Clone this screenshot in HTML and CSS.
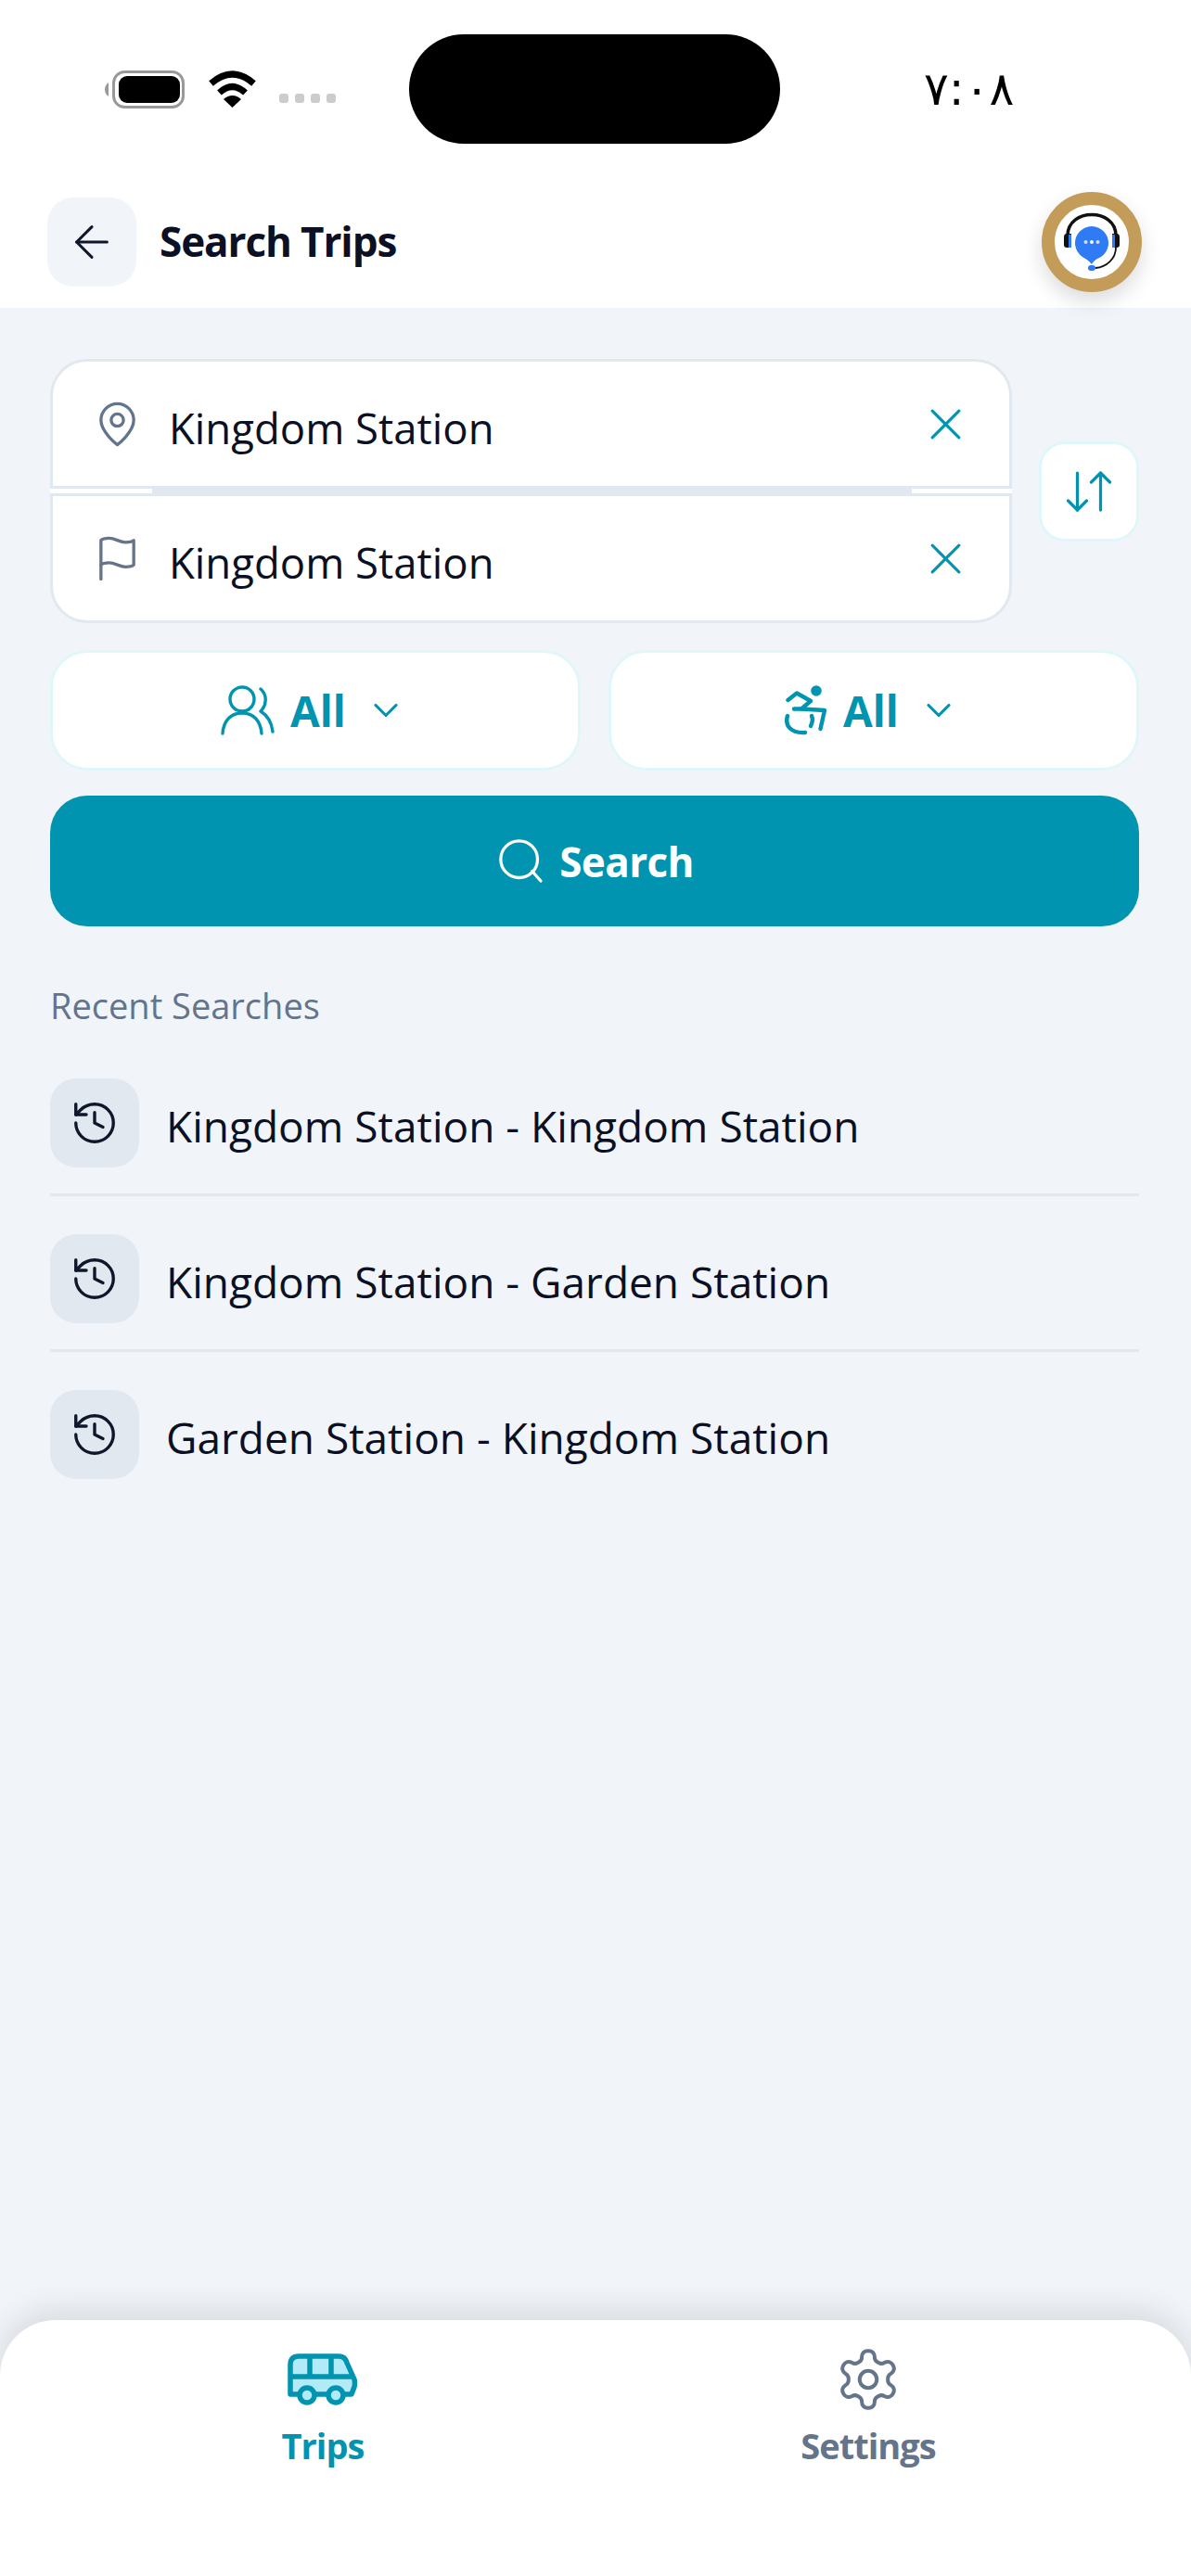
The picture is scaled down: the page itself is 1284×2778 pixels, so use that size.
FILE: index.html
```html
<!DOCTYPE html>
<html lang="en">

<head>
    <meta charset="UTF-8">
    <meta name="viewport" content="width=device-width, initial-scale=1.0">
    <title>Search Trips</title>
    <link rel="stylesheet" href="styles.css">
</head>

<body>
    <!-- status bar -->
    <div class="status-bar">
        <svg class="battery" width="87" height="41" viewBox="0 0 87 41">
            <path d="M5 13 Q1 16 1 20.5 Q1 25 5 28Z" fill="#999"/>
            <rect x="10.5" y="1.5" width="75" height="38" rx="12" fill="#fff" stroke="#999" stroke-width="3"/>
            <rect x="16" y="6" width="66" height="29" rx="9" fill="#000"/>
        </svg>
        <svg class="wifi" width="53" height="40" viewBox="0 0 53 40">
            <path d="M3.5 14 Q26.5 -6 49.5 14" fill="none" stroke="#000" stroke-width="7"/>
            <path d="M12.5 24 Q26.5 11 40.5 24" fill="none" stroke="#000" stroke-width="7"/>
            <path d="M26.5 40 L17 31 Q26.5 23 36 31Z" fill="#000"/>
        </svg>
        <div class="signal">
            <span></span><span></span><span></span><span></span>
        </div>
        <div class="island"></div>
        <div class="clock">٧:٠٨</div>
    </div>

    <!-- header -->
    <header class="top-bar">
        <div class="back-btn">
            <svg class="icon" width="56" height="56" viewBox="0 0 24 24" stroke-width="1.3">
                <path d="m12 19-7-7 7-7"/>
                <path d="M19 12H5"/>
            </svg>
        </div>
        <div class="page-title">Search Trips</div>
        <div class="support-btn">
            <svg width="80" height="80" viewBox="14 14 80 80" fill="none">
                <path d="M28 47 C28 17 80 17 80 47" stroke="#111" stroke-width="3.5"/>
                <path d="M27 45 Q24 45 24 49 V57 Q24 60 27 60 H32 V45Z" fill="#111"/>
                <rect x="29" y="46" width="3" height="14" fill="#2f7bf5"/>
                <path d="M81 45 Q84 45 84 49 V57 Q84 60 81 60 H76 V45Z" fill="#111"/>
                <rect x="76" y="46" width="3" height="14" fill="#2f7bf5"/>
                <path d="M80 60 C80 72 70 81 58 82" stroke="#111" stroke-width="1.8"/>
                <path d="M54 78 C50 73 47 72 44 70 A18 18 0 1 1 64 70 C60 72 57 73 54 78Z" fill="#2f7bf5"/>
                <rect x="50" y="79" width="8" height="6" rx="3" fill="#2f7bf5"/>
                <circle cx="47.5" cy="54" r="2" fill="#cfe0ff"/>
                <circle cx="54" cy="54" r="2" fill="#fff"/>
                <circle cx="60.5" cy="54" r="2" fill="#cfe0ff"/>
            </svg>
        </div>
    </header>

    <main class="content">
        <!-- from / to -->
        <div class="route-row">
            <div class="route-card">
                <div class="route-field route-from">
                    <svg class="icon icon-muted" width="53" height="53" viewBox="0 0 24 24" stroke-width="1.5">
                        <path d="M20 10c0 6-8 12-8 12s-8-6-8-12a8 8 0 0 1 16 0Z"/>
                        <circle cx="12" cy="10" r="3"/>
                    </svg>
                    <span class="route-name">Kingdom Station</span>
                    <svg class="icon icon-teal" width="53" height="53" viewBox="0 0 24 24" stroke-width="1.4">
                        <path d="M18.5 5.5 5.5 18.5"/>
                        <path d="m5.5 5.5 13 13"/>
                    </svg>
                </div>
                <div class="route-divider"></div>
                <div class="route-field route-to">
                    <svg class="icon icon-muted" width="53" height="53" viewBox="0 0 24 24" stroke-width="1.5">
                        <path d="M4 15s1-1 4-1 5 2 8 2 4-1 4-1V3s-1 1-4 1-5-2-8-2-4 1-4 1z"/>
                        <path d="M4 22v-7"/>
                    </svg>
                    <span class="route-name">Kingdom Station</span>
                    <svg class="icon icon-teal" width="53" height="53" viewBox="0 0 24 24" stroke-width="1.4">
                        <path d="M18.5 5.5 5.5 18.5"/>
                        <path d="m5.5 5.5 13 13"/>
                    </svg>
                </div>
            </div>
            <div class="swap-btn">
                <svg class="icon icon-teal" width="60" height="60" viewBox="0 0 24 24" stroke-width="1.3">
                    <path d="m3 16 4 4 4-4"/>
                    <path d="M7 20V4"/>
                    <path d="m21 8-4-4-4 4"/>
                    <path d="M17 4v16"/>
                </svg>
            </div>
        </div>

        <!-- passenger filters -->
        <div class="filter-row">
            <div class="filter-btn">
                <svg class="icon icon-teal" width="58" height="54" viewBox="0 0 58 54" stroke-width="3.4">
                    <circle cx="23" cy="15" r="13"/>
                    <path d="M2 52 C3 38 11 30 23 30 C35 30 43 38 44 52"/>
                    <path d="M43 4 C50 10 50 21 43 28 C51 33 55 41 56 50"/>
                </svg>
                <span class="filter-text">All</span>
                <svg class="icon icon-teal filter-arrow" width="44" height="44" viewBox="0 0 24 24" stroke-width="1.7">
                    <path d="m6 9 6 6 6-6"/>
                </svg>
            </div>
            <div class="filter-btn">
                <svg class="icon icon-teal" width="46" height="54" viewBox="0 0 46 54" stroke-width="4.4">
                    <circle cx="34" cy="6" r="3.6" fill="currentColor"/>
                    <path d="M3.5 16 L13 8.5 L28 17 L18 25.5 H10"/>
                    <path d="M18 25.5 L43 27 L38.5 47"/>
                    <path d="M3 33 C0 43 6 52 22 51"/>
                    <path d="M29 33 C31 37 29 42 28 44"/>
                </svg>
                <span class="filter-text">All</span>
                <svg class="icon icon-teal filter-arrow" width="44" height="44" viewBox="0 0 24 24" stroke-width="1.7">
                    <path d="m6 9 6 6 6-6"/>
                </svg>
            </div>
        </div>

        <div class="search-btn">
            <svg class="icon" width="56" height="56" viewBox="0 0 24 24" stroke-width="1.4">
                <circle cx="11" cy="11" r="8.5"/>
                <path d="m21 21-4-4.5"/>
            </svg>
            <span>Search</span>
        </div>

        <!-- recent searches -->
        <div class="recent-title">Recent Searches</div>
        <div class="recent-list">
            <div class="recent-item">
                <div class="recent-icon">
                    <svg class="icon" width="54" height="54" viewBox="0 0 24 24" stroke-width="1.5">
                        <path d="M3 12a9 9 0 1 0 9-9 9.75 9.75 0 0 0-6.74 2.74L3 8"/>
                        <path d="M3 3v5h5"/>
                        <path d="M12 7v5l4 2"/>
                    </svg>
                </div>
                <span class="recent-text">Kingdom Station - Kingdom Station</span>
            </div>
            <div class="recent-item">
                <div class="recent-icon">
                    <svg class="icon" width="54" height="54" viewBox="0 0 24 24" stroke-width="1.5">
                        <path d="M3 12a9 9 0 1 0 9-9 9.75 9.75 0 0 0-6.74 2.74L3 8"/>
                        <path d="M3 3v5h5"/>
                        <path d="M12 7v5l4 2"/>
                    </svg>
                </div>
                <span class="recent-text">Kingdom Station - Garden Station</span>
            </div>
            <div class="recent-item">
                <div class="recent-icon">
                    <svg class="icon" width="54" height="54" viewBox="0 0 24 24" stroke-width="1.5">
                        <path d="M3 12a9 9 0 1 0 9-9 9.75 9.75 0 0 0-6.74 2.74L3 8"/>
                        <path d="M3 3v5h5"/>
                        <path d="M12 7v5l4 2"/>
                    </svg>
                </div>
                <span class="recent-text">Garden Station - Kingdom Station</span>
            </div>
        </div>
    </main>

    <!-- bottom tabs -->
    <nav class="tab-bar">
        <div class="tab tab-active">
            <div class="tab-icon">
                <svg width="76" height="56" viewBox="0 0 76 56" stroke="#0094b0" stroke-width="5.5" stroke-linejoin="round">
                    <path d="M3 44 V12 Q3 3 12 3 H55 Q62 3 64 10 L72 28 Q73 32 72 36 L69 44Z" fill="#b0ebf7"/>
                    <path d="M3 25 H70 M24 3 V25 M47 3 V25" fill="none"/>
                    <circle cx="21" cy="45" r="8" fill="#b0ebf7"/>
                    <circle cx="52" cy="45" r="8" fill="#b0ebf7"/>
                </svg>
            </div>
            <span>Trips</span>
        </div>
        <div class="tab">
            <div class="tab-icon">
                <svg class="icon" width="74" height="74" viewBox="0 0 24 24" stroke-width="1.3">
                    <path d="M12.22 2h-.44a2 2 0 0 0-2 2v.18a2 2 0 0 1-1 1.73l-.43.25a2 2 0 0 1-2 0l-.15-.08a2 2 0 0 0-2.73.73l-.22.38a2 2 0 0 0 .73 2.73l.15.1a2 2 0 0 1 1 1.72v.51a2 2 0 0 1-1 1.74l-.15.09a2 2 0 0 0-.73 2.73l.22.38a2 2 0 0 0 2.73.73l.15-.08a2 2 0 0 1 2 0l.43.25a2 2 0 0 1 1 1.73V20a2 2 0 0 0 2 2h.44a2 2 0 0 0 2-2v-.18a2 2 0 0 1 1-1.73l.43-.25a2 2 0 0 1 2 0l.15.08a2 2 0 0 0 2.73-.73l.22-.39a2 2 0 0 0-.73-2.73l-.15-.08a2 2 0 0 1-1-1.74v-.5a2 2 0 0 1 1-1.74l.15-.09a2 2 0 0 0 .73-2.73l-.22-.38a2 2 0 0 0-2.73-.73l-.15.08a2 2 0 0 1-2 0l-.43-.25a2 2 0 0 1-1-1.73V4a2 2 0 0 0-2-2z"/>
                    <circle cx="12" cy="12" r="3"/>
                </svg>
            </div>
            <span>Settings</span>
        </div>
    </nav>
</body>

</html>
```

FILE: styles.css
```css
/* global */
* {
    box-sizing: border-box;
}

body {
    margin: 0;
    padding: 0;
    width: 1284px;
    height: 2778px;
    display: flex;
    flex-direction: column;
    font-family: "Open Sans", "Noto Sans", sans-serif;
    background-color: #f1f5f9;
    color: #0b1024;
    overflow: hidden;
}

.icon {
    display: block;
    flex-shrink: 0;
    fill: none;
    stroke: currentColor;
    stroke-linecap: round;
    stroke-linejoin: round;
}

.icon-muted {
    color: #64748b;
}

.icon-teal {
    color: #0094b0;
}

/* status bar */
.status-bar {
    height: 190px;
    padding: 37px 0 35px 112px;
    display: flex;
    align-items: center;
    background: #fff;
}

.wifi {
    margin-left: 25px;
}

.signal {
    display: flex;
    gap: 7px;
    margin: 20px 0 0 24px;
}

.signal span {
    width: 10px;
    height: 10px;
    border-radius: 3px;
    background: #ccc;
}

.island {
    width: 400px;
    height: 118px;
    margin-left: 79px;
    border-radius: 59px;
    background: #000;
}

.clock {
    margin-left: 155px;
    font-family: "DejaVu Sans", sans-serif;
    font-size: 50px;
    color: #000;
}

/* header */
.top-bar {
    position: relative;
    height: 142px;
    padding: 0 53px 0 51px;
    display: flex;
    align-items: center;
    background: #fff;
}

.back-btn {
    width: 96px;
    height: 96px;
    display: flex;
    justify-content: center;
    align-items: center;
    border-radius: 28px;
    background: #f1f5f9;
    color: #0f172a;
}

.page-title {
    flex: 1;
    margin-left: 25px;
    padding-bottom: 3px;
    font-size: 44px;
    font-weight: 700;
    letter-spacing: -1.1px;
}

.support-btn {
    width: 108px;
    height: 108px;
    border: 14px solid #c49c5a;
    border-radius: 50%;
    background: #fff;
    box-shadow: 0 10px 22px rgba(0, 0, 0, 0.14);
}

.support-btn svg {
    display: block;
}

/* search form */
.content {
    flex: 1;
    padding: 55px 56px 0 54px;
}

.route-row {
    display: flex;
    align-items: center;
    gap: 29px;
}

.route-card {
    width: 1037px;
    display: flex;
    flex-direction: column;
}

.route-field {
    height: 140px;
    padding: 0 42px 0 43px;
    display: flex;
    align-items: center;
    gap: 29px;
    background: #fff;
    border: 3px solid #e2e8f0;
}

.route-from {
    border-radius: 40px 40px 0 0;
}

.route-to {
    border-radius: 0 0 40px 40px;
}

.route-divider {
    height: 5px;
    background: #fff;
}

.route-divider::before {
    content: "";
    display: block;
    height: 100%;
    margin: 0 108px 0 110px;
    background: #e2e8f0;
}

.route-name {
    flex: 1;
    padding-top: 8px;
    font-size: 45.5px;
}

.swap-btn {
    width: 108px;
    height: 108px;
    display: flex;
    justify-content: center;
    align-items: center;
    border: 3px solid #e0f7fa;
    border-radius: 28px;
    background: #fff;
}

.filter-row {
    display: flex;
    gap: 30px;
    margin-top: 29px;
}

.filter-btn {
    flex: 1;
    height: 130px;
    display: flex;
    justify-content: center;
    align-items: center;
    gap: 17px;
    border: 3px solid #e0f7fa;
    border-radius: 40px;
    background: #fff;
    color: #0094b0;
}

.filter-text {
    font-size: 46px;
    font-weight: 700;
}

.filter-arrow {
    margin: 0 4px;
}

.search-btn {
    height: 141px;
    margin-top: 27px;
    display: flex;
    justify-content: center;
    align-items: center;
    gap: 13px;
    border-radius: 40px;
    background: #0094b0;
    color: #fff;
    font-size: 44px;
    font-weight: 700;
    letter-spacing: -0.6px;
}

/* recent searches */
.recent-title {
    margin-top: 59px;
    font-size: 38px;
    color: #64748b;
}

.recent-list {
    margin-top: 53px;
}

.recent-item {
    display: flex;
    align-items: center;
    gap: 29px;
    padding-bottom: 28px;
    margin-bottom: 41px;
    border-bottom: 3px solid #e2e8f0;
}

.recent-item:last-child {
    border-bottom: none;
}

.recent-icon {
    width: 96px;
    height: 96px;
    display: flex;
    justify-content: center;
    align-items: center;
    border-radius: 28px;
    background: #e2e8f0;
    color: #0f172a;
}

.recent-text {
    padding-top: 6px;
    font-size: 46px;
}

/* bottom tabs */
.tab-bar {
    height: 276px;
    padding: 26px 54px 0;
    display: flex;
    border-radius: 60px 60px 0 0;
    background: #fff;
    box-shadow: 0 -8px 36px rgba(0, 0, 0, 0.12);
}

.tab {
    flex: 1;
    display: flex;
    flex-direction: column;
    align-items: center;
    font-size: 38px;
    font-weight: 700;
    letter-spacing: -1px;
    color: #64748b;
}

.tab-active {
    color: #0094b0;
}

.tab-icon {
    height: 76px;
    margin-bottom: 7px;
    display: flex;
    align-items: center;
}
```
